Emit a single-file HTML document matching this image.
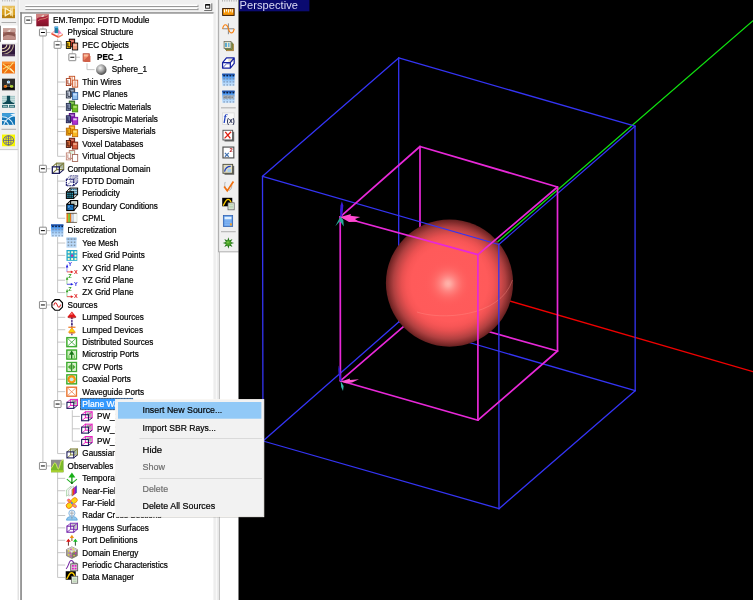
<!DOCTYPE html>
<html><head><meta charset="utf-8"><title>EM.Tempo</title>
<style>html,body{margin:0;padding:0;background:#fff;overflow:hidden}svg{will-change:transform}svg text{white-space:pre}</style></head>
<body>
<svg width="753" height="600" viewBox="0 0 753 600" style="display:block">

<defs>
<linearGradient id="groot" x1="0" y1="0" x2="0" y2="1"><stop offset="0" stop-color="#b03040"/><stop offset=".5" stop-color="#a01838"/><stop offset="1" stop-color="#7c1428"/></linearGradient>
<radialGradient id="gsph" cx=".4" cy=".35" r=".7"><stop offset="0" stop-color="#f4f4f4"/><stop offset=".45" stop-color="#a8a8a8"/><stop offset="1" stop-color="#404040"/></radialGradient>
<linearGradient id="gb" x1="0" y1="0" x2="0" y2="1"><stop offset="0" stop-color="#2060c0"/><stop offset=".25" stop-color="#4c98f0"/><stop offset=".6" stop-color="#a0ccf8"/><stop offset="1" stop-color="#d0e8ff"/></linearGradient>
<linearGradient id="grain" x1="0" y1="0" x2="1" y2="0"><stop offset="0" stop-color="#f0e020"/><stop offset=".3" stop-color="#f03020"/><stop offset=".6" stop-color="#c020c0"/><stop offset="1" stop-color="#2020e0"/></linearGradient>
<radialGradient id="gball" cx="0.5" cy="0.5" r="0.5">
 <stop offset="0" stop-color="#ff5c5c"/>
 <stop offset=".6" stop-color="#ff5a5a"/>
 <stop offset=".68" stop-color="#f85656"/>
 <stop offset=".75" stop-color="#e85050"/>
 <stop offset=".82" stop-color="#cc4848"/>
 <stop offset=".88" stop-color="#b04040"/>
 <stop offset=".94" stop-color="#8c3030"/>
 <stop offset="1" stop-color="#662020"/>
</radialGradient>
<radialGradient id="ghl" cx="0.5" cy="0.5" r="0.5">
 <stop offset="0" stop-color="#ffb4ac" stop-opacity="1"/>
 <stop offset=".12" stop-color="#ffaca4" stop-opacity=".95"/>
 <stop offset=".35" stop-color="#ff8c88" stop-opacity=".75"/>
 <stop offset=".6" stop-color="#ff7470" stop-opacity=".45"/>
 <stop offset=".8" stop-color="#ff6664" stop-opacity=".2"/>
 <stop offset="1" stop-color="#ff5c5c" stop-opacity="0"/>
</radialGradient>
</defs>

<rect x="0" y="0" width="753" height="600" fill="#fff"/>
<rect x="0" y="0" width="18" height="149.6" fill="#f0f0f0"/>
<rect x="0" y="149.2" width="18.3" height="0.9" fill="#c4c4c4"/>
<rect x="17.7" y="0" width="0.9" height="600" fill="#d0d0d0"/>
<rect x="19.4" y="0" width="199" height="13" fill="#f0f0f0"/>
<rect x="20.2" y="12.3" width="1.7" height="588" fill="#8c8c8c"/>
<rect x="20.2" y="12.3" width="194" height="1.3" fill="#808080"/>
<rect x="213.4" y="12.3" width="5" height="588" fill="#ededed"/>
<rect x="25.2" y="4.6" width="172.8" height="1.4" fill="#ffffff"/>
<rect x="25.4" y="6.0" width="172.8" height="1.0" fill="#989898"/>
<rect x="197.6" y="4.800000000000001" width="0.8" height="2.2" fill="#989898"/>
<rect x="25.2" y="7.700000000000001" width="172.8" height="1.4" fill="#ffffff"/>
<rect x="25.4" y="9.100000000000001" width="172.8" height="1.0" fill="#989898"/>
<rect x="197.6" y="7.9" width="0.8" height="2.2" fill="#989898"/>
<rect x="204.2" y="3.3" width="7.6" height="7.2" fill="#f0f0f0"/>
<path d="M204.2 10.5V3.3H211.8" fill="none" stroke="#fff" stroke-width="0.9"/>
<path d="M204.2 10.5H211.8V3.3" fill="none" stroke="#606060" stroke-width="0.9"/>
<rect x="205.6" y="4.6" width="4.2" height="3.6" fill="none" stroke="#000" stroke-width="0.8"/>
<rect x="205.6" y="4.3" width="4.2" height="1.3" fill="#000"/>
<rect x="2.2" y="0" width="0.9" height="1.5" fill="#b4b4b4"/>
<rect x="4.5" y="0" width="0.9" height="1.5" fill="#b4b4b4"/>
<rect x="6.8" y="0" width="0.9" height="1.5" fill="#b4b4b4"/>
<rect x="9.1" y="0" width="0.9" height="1.5" fill="#b4b4b4"/>
<rect x="11.4" y="0" width="0.9" height="1.5" fill="#b4b4b4"/>
<rect x="13.7" y="0" width="0.9" height="1.5" fill="#b4b4b4"/>
<g transform="translate(2.0 5.90) scale(0.8125 0.7625)"><rect x="0" y="0" width="16" height="16" fill="#d8a020"/><rect x="0" y="0" width="16" height="4" fill="#e8c060"/><rect x="0" y="12" width="16" height="4" fill="#b88010"/><path d="M4 2V14M4 3L12 8L4 13M11 3V13" stroke="#fff4d0" stroke-width="1.6" fill="none"/><path d="M13 2V14" stroke="#f8e0a0" stroke-width="1.2"/></g>
<rect x="1.5" y="22.0" width="14.6" height="0.9" fill="#a4a4a4"/>
<rect x="0.8" y="25.5" width="16.6" height="17.2" fill="#fff"/>
<rect x="0" y="25.700000000000003" width="0.9" height="16.2" fill="#707070"/>
<g transform="translate(3.0 28.45) scale(0.7750 0.7063)"><rect x="0" y="0" width="16" height="16" fill="#a87068"/><rect x="0" y="0" width="16" height="5" fill="#c8a098"/><path d="M0 9C4 4 9 4 16 8V16H0Z" fill="#8c5850"/><path d="M0 16V12C5 8 10 9 16 12V16Z" fill="#c09088"/><path d="M5 4L10 1L9 5Z" fill="#f0e0d8"/></g>
<g transform="translate(2.0 44.45) scale(0.8125 0.7312)"><rect x="0" y="0" width="16" height="16" fill="#30183c"/><path d="M0 6A6 6 0 0 0 6 0" fill="none" stroke="#e8d8b0" stroke-width="1.4"/><path d="M0 10A10 10 0 0 0 10 0" fill="none" stroke="#e0d0a8" stroke-width="1.4"/><path d="M0 14A14 14 0 0 0 14 0" fill="none" stroke="#c0b090" stroke-width="1.3"/><rect x="0" y="13" width="16" height="3" fill="#503858"/></g>
<g transform="translate(2.0 61.75) scale(0.8125 0.7312)"><rect x="0" y="0" width="16" height="16" fill="#f07010"/><rect x="0" y="0" width="16" height="3" fill="#f89030"/><path d="M1 3L14 14M14 1L3 15M1 10L9 5" stroke="#f8e080" stroke-width="1.3" fill="none"/><path d="M10 9L15 15" stroke="#fff0c0" stroke-width="1.5"/></g>
<g transform="translate(2.0 78.65) scale(0.8125 0.7312)"><rect x="0" y="0" width="16" height="16" fill="#2c2c2c"/><path d="M1 13Q8 9 15 13V15H1Z" fill="#080808"/><path d="M8 5L4.4 10.6H11.6Z" fill="none" stroke="#707070" stroke-width=".9"/><circle cx="8" cy="4.6" r="2.1" fill="#d8ecf8"/><circle cx="8.3" cy="4.2" r="1" fill="#68b0f0"/><circle cx="4.2" cy="10.6" r="2.0" fill="#f09020"/><circle cx="3.6" cy="11.2" r="1" fill="#e04020"/><circle cx="11.8" cy="10.6" r="2.0" fill="#d8e040"/><circle cx="12.2" cy="10" r="1" fill="#60c030"/></g>
<g transform="translate(2.0 95.85) scale(0.8125 0.7312)"><rect x="0" y="0" width="16" height="16" fill="#a4c8c8"/><path d="M0 2.5H16M0 5H16M0 7.5H16" stroke="#d4e8e8" stroke-width=".9"/><path d="M6 0H10V5.5Q10.4 9 15 10V11.5H1V10Q5.6 9 6 5.5Z" fill="#0c4854"/><rect x="0" y="11.5" width="16" height="1.3" fill="#f0f8f8"/><rect x="0" y="12.8" width="16" height="3.2" fill="#1c5c68"/><path d="M1 14.4H6.6M9.4 14.4H15" stroke="#a8d0d0" stroke-width="1.2"/><rect x="7.4" y="11.5" width="1.2" height="4.5" fill="#f0f8f8"/></g>
<g transform="translate(2.0 113.15) scale(0.8125 0.7312)"><rect x="0" y="0" width="16" height="16" fill="#1474b4"/><rect x="0" y="0" width="16" height="5" fill="#3c9cd8"/><path d="M16 0V5L10 2Z" fill="#e8f4ff"/><path d="M0 5C6 5 12 9 14 16M0 10C4 10 7 12 8 16M16 3C9 5 4 10 2 16" stroke="#e0f2ff" stroke-width="1.4" fill="none"/></g>
<rect x="1.5" y="128.8" width="14.6" height="0.9" fill="#a4a4a4"/>
<g transform="translate(2.0 134.55) scale(0.8125 0.7312)"><rect x="0" y="0" width="16" height="16" fill="#f8f800"/><circle cx="8" cy="8" r="6.4" fill="none" stroke="#4848b0" stroke-width="1.0"/><ellipse cx="8" cy="8" rx="3" ry="6.4" fill="none" stroke="#5050b0" stroke-width=".75"/><path d="M1.6 8H14.4M8 1.6V14.4" stroke="#4040a8" stroke-width=".9" fill="none"/><path d="M2.8 4.4Q8 6.6 13.2 4.4M2.8 11.6Q8 9.4 13.2 11.6" stroke="#5858b8" stroke-width=".7" fill="none"/></g>
<path d="M31.70 20.10H35.80 M42.90 26.30V465.96 M46.40 32.48H50.50 M57.60 38.69V156.33 M61.10 44.87H65.20 M72.30 51.07V57.26 M75.80 57.26H79.90 M87.00 63.46V69.64 M87.00 69.64H94.60 M57.60 82.03H65.20 M57.60 94.41H65.20 M57.60 106.79H65.20 M57.60 119.18H65.20 M57.60 131.56H65.20 M57.60 143.95H65.20 M57.60 156.33H65.20 M46.40 168.72H50.50 M57.60 174.92V218.26 M57.60 181.10H65.20 M57.60 193.49H65.20 M57.60 205.88H65.20 M57.60 218.26H65.20 M46.40 230.64H50.50 M57.60 236.84V292.57 M57.60 243.03H65.20 M57.60 255.41H65.20 M57.60 267.80H65.20 M57.60 280.19H65.20 M57.60 292.57H65.20 M46.40 304.96H50.50 M57.60 311.16V453.57 M57.60 317.34H65.20 M57.60 329.73H65.20 M57.60 342.11H65.20 M57.60 354.50H65.20 M57.60 366.88H65.20 M57.60 379.27H65.20 M57.60 391.65H65.20 M61.10 404.04H65.20 M72.30 410.24V441.19 M72.30 416.42H79.90 M72.30 428.81H79.90 M72.30 441.19H79.90 M57.60 453.57H65.20 M46.40 465.96H50.50 M57.60 472.16V577.43 M57.60 478.35H65.20 M57.60 490.73H65.20 M57.60 503.12H65.20 M57.60 515.50H65.20 M57.60 527.88H65.20 M57.60 540.27H65.20 M57.60 552.65H65.20 M57.60 565.04H65.20 M57.60 577.43H65.20" stroke="#bcbcbc" stroke-width="0.85" fill="none"/>
<rect x="24.75" y="16.65" width="6.9" height="6.9" fill="#fff" stroke="#808080" stroke-width="0.9" rx="0.4"/>
<rect x="26.20" y="19.60" width="4.0" height="1.0" fill="#000"/>
<g transform="translate(36.30 13.90) scale(0.774)"><rect x="0" y="0" width="16" height="16" fill="url(#groot)"/><path d="M0 7C4 2 8 6 16 1V0H0Z" fill="#d89890" opacity=".8"/><path d="M2 9C6 5 10 8 15 4" stroke="#e0a070" stroke-width="1.2" fill="none" opacity=".8"/><path d="M6 3L10 1L9 4Z" fill="#f4e8e0"/></g>
<text transform="translate(52.90 22.95) scale(0.9055555555555556 1)" font-family="'Liberation Sans', sans-serif" font-size="9.0" fill="#000" stroke="#000" stroke-width="0.22" textLength="106.67" lengthAdjust="spacingAndGlyphs">EM.Tempo: FDTD Module</text>
<rect x="39.45" y="29.04" width="6.9" height="6.9" fill="#fff" stroke="#808080" stroke-width="0.9" rx="0.4"/>
<rect x="40.90" y="31.98" width="4.0" height="1.0" fill="#000"/>
<g transform="translate(51.00 26.29) scale(0.774)"><path d="M0.5 8.5L6 4L15.5 10L9.5 14.6Z" fill="#f8b0b8"/><path d="M0.5 8.5L9.5 13V15.2L0.5 10.6Z" fill="#e85038"/><path d="M9.5 13L15.5 10V11.6L9.5 15.2Z" fill="#f08058"/><path d="M2.4 8.8L5.6 7L9.6 9.4L7.6 11.6Z" fill="#fff"/><path d="M10.4 10.4L12.8 9L14.4 10L11.2 12.2Z" fill="#fff"/><path d="M9 3L13.8 9.2H9Z" fill="#f080c0"/><rect x="4.6" y="0.4" width="4.6" height="8.4" fill="#2074a8"/><rect x="4.6" y="0.4" width="4.6" height="1.8" fill="#58b0e8"/><rect x="7.4" y="2.2" width="1.8" height="6.6" fill="#18909c"/></g>
<text transform="translate(67.60 35.34) scale(0.9055555555555556 1)" font-family="'Liberation Sans', sans-serif" font-size="9.0" fill="#000" stroke="#000" stroke-width="0.22">Physical Structure</text>
<rect x="54.15" y="41.42" width="6.9" height="6.9" fill="#fff" stroke="#808080" stroke-width="0.9" rx="0.4"/>
<rect x="55.60" y="44.37" width="4.0" height="1.0" fill="#000"/>
<g transform="translate(65.70 38.67) scale(0.774)"><rect x="4.6" y="0.6" width="7" height="10" fill="#c83828" stroke="#000" stroke-width="1.1"/><rect x="5.8" y="2" width="4.6" height="2.2" fill="#f8c0a8" opacity=".65"/><rect x="0.8" y="3.6" width="5.6" height="9" fill="#f0c010" stroke="#000" stroke-width="1.1"/><path d="M2.8 5.5V10.6H5.6" stroke="#000" fill="none" stroke-width="1.1"/><rect x="8.6" y="5.6" width="6.9" height="9" fill="#f09878" stroke="#000" stroke-width="1.1"/><rect x="9.8" y="7" width="4.5" height="2.4" fill="#f8c0a8"/></g>
<text transform="translate(82.30 47.72) scale(0.9055555555555556 1)" font-family="'Liberation Sans', sans-serif" font-size="9.0" fill="#000" stroke="#000" stroke-width="0.22">PEC Objects</text>
<rect x="68.85" y="53.80" width="6.9" height="6.9" fill="#fff" stroke="#808080" stroke-width="0.9" rx="0.4"/>
<rect x="70.30" y="56.76" width="4.0" height="1.0" fill="#000"/>
<g transform="translate(80.40 51.05) scale(0.774)"><rect x="3.5" y="3.5" width="8" height="9.5" fill="#f08868" stroke="#b04030"/><rect x="4.5" y="4.5" width="5" height="2.5" fill="#f8c0a0"/><path d="M11.5 5.5L13 7V14H6L3.5 13" fill="#d06048" stroke="none"/></g>
<text transform="translate(97.00 60.11) scale(0.9055555555555556 1)" font-family="'Liberation Sans', sans-serif" font-size="9.0" fill="#000" stroke="#000" stroke-width="0.22" font-weight="bold">PEC_1</text>
<g transform="translate(95.10 63.44) scale(0.774)"><circle cx="8" cy="8" r="6.8" fill="url(#gsph)"/></g>
<text transform="translate(111.70 72.49) scale(0.9055555555555556 1)" font-family="'Liberation Sans', sans-serif" font-size="9.0" fill="#000" stroke="#000" stroke-width="0.22">Sphere_1</text>
<g transform="translate(65.70 75.83) scale(0.774)"><rect x="4.6" y="0.6" width="7" height="10" fill="#fff" stroke="#c04818" stroke-width="1.1"/><rect x="0.8" y="3.6" width="5.6" height="9" fill="#fff" stroke="#a03010" stroke-width="1.1"/><path d="M2.8 5.5V10.6H5.6" stroke="#a03010" fill="none" stroke-width="1.1"/><rect x="8.6" y="5.6" width="6.9" height="9" fill="#fff" stroke="#c04818" stroke-width="1.1"/><path d="M6.5 1V10M8.5 1V10M11 7V15M13 7V15" stroke="#e07040" stroke-width=".9"/></g>
<text transform="translate(82.30 84.88) scale(0.9055555555555556 1)" font-family="'Liberation Sans', sans-serif" font-size="9.0" fill="#000" stroke="#000" stroke-width="0.22">Thin Wires</text>
<g transform="translate(65.70 88.21) scale(0.774)"><rect x="4.6" y="0.6" width="7" height="10" fill="#505868" stroke="#303848" stroke-width="1.1"/><rect x="5.8" y="2" width="4.6" height="2.2" fill="#c8e0ff" opacity=".65"/><rect x="0.8" y="3.6" width="5.6" height="9" fill="#c8d0e0" stroke="#202838" stroke-width="1.1"/><path d="M2.8 5.5V10.6H5.6" stroke="#202838" fill="none" stroke-width="1.1"/><rect x="8.6" y="5.6" width="6.9" height="9" fill="#90c0f0" stroke="#3060a0" stroke-width="1.1"/><rect x="9.8" y="7" width="4.5" height="2.4" fill="#c8e0ff"/></g>
<text transform="translate(82.30 97.26) scale(0.9055555555555556 1)" font-family="'Liberation Sans', sans-serif" font-size="9.0" fill="#000" stroke="#000" stroke-width="0.22">PMC Planes</text>
<g transform="translate(65.70 100.59) scale(0.774)"><rect x="4.6" y="0.6" width="7" height="10" fill="#50a030" stroke="#306020" stroke-width="1.1"/><rect x="5.8" y="2" width="4.6" height="2.2" fill="#b0e070" opacity=".65"/><rect x="0.8" y="3.6" width="5.6" height="9" fill="#8090b0" stroke="#202848" stroke-width="1.1"/><path d="M2.8 5.5V10.6H5.6" stroke="#202848" fill="none" stroke-width="1.1"/><rect x="8.6" y="5.6" width="6.9" height="9" fill="#70c020" stroke="#408010" stroke-width="1.1"/><rect x="9.8" y="7" width="4.5" height="2.4" fill="#b0e070"/></g>
<text transform="translate(82.30 109.64) scale(0.9055555555555556 1)" font-family="'Liberation Sans', sans-serif" font-size="9.0" fill="#000" stroke="#000" stroke-width="0.22">Dielectric Materials</text>
<g transform="translate(65.70 112.98) scale(0.774)"><rect x="4.6" y="0.6" width="7" height="10" fill="#8020b0" stroke="#500880" stroke-width="1.1"/><rect x="5.8" y="2" width="4.6" height="2.2" fill="#e0d0f0" opacity=".65"/><rect x="0.8" y="3.6" width="5.6" height="9" fill="#6870a0" stroke="#181848" stroke-width="1.1"/><path d="M2.8 5.5V10.6H5.6" stroke="#181848" fill="none" stroke-width="1.1"/><rect x="8.6" y="5.6" width="6.9" height="9" fill="#b030d0" stroke="#7010a0" stroke-width="1.1"/><rect x="9.8" y="7" width="4.5" height="2.4" fill="#e0d0f0"/></g>
<text transform="translate(82.30 122.03) scale(0.9055555555555556 1)" font-family="'Liberation Sans', sans-serif" font-size="9.0" fill="#000" stroke="#000" stroke-width="0.22">Anisotropic Materials</text>
<g transform="translate(65.70 125.36) scale(0.774)"><rect x="4.6" y="0.6" width="7" height="10" fill="#f0a010" stroke="#c06000" stroke-width="1.1"/><rect x="5.8" y="2" width="4.6" height="2.2" fill="#ffe080" opacity=".65"/><rect x="0.8" y="3.6" width="5.6" height="9" fill="#f0b010" stroke="#b06000" stroke-width="1.1"/><path d="M2.8 5.5V10.6H5.6" stroke="#b06000" fill="none" stroke-width="1.1"/><rect x="8.6" y="5.6" width="6.9" height="9" fill="#f8b820" stroke="#c06800" stroke-width="1.1"/><rect x="9.8" y="7" width="4.5" height="2.4" fill="#ffe080"/></g>
<text transform="translate(82.30 134.41) scale(0.9055555555555556 1)" font-family="'Liberation Sans', sans-serif" font-size="9.0" fill="#000" stroke="#000" stroke-width="0.22">Dispersive Materials</text>
<g transform="translate(65.70 137.75) scale(0.774)"><rect x="4.6" y="0.6" width="7" height="10" fill="#a83020" stroke="#601810" stroke-width="1.1"/><rect x="5.8" y="2" width="4.6" height="2.2" fill="#f0a888" opacity=".65"/><rect x="0.8" y="3.6" width="5.6" height="9" fill="#d06838" stroke="#401008" stroke-width="1.1"/><path d="M2.8 5.5V10.6H5.6" stroke="#401008" fill="none" stroke-width="1.1"/><rect x="8.6" y="5.6" width="6.9" height="9" fill="#d86040" stroke="#702010" stroke-width="1.1"/><rect x="9.8" y="7" width="4.5" height="2.4" fill="#f0a888"/></g>
<text transform="translate(82.30 146.80) scale(0.9055555555555556 1)" font-family="'Liberation Sans', sans-serif" font-size="9.0" fill="#000" stroke="#000" stroke-width="0.22">Voxel Databases</text>
<g transform="translate(65.70 150.13) scale(0.774)"><rect x="4.6" y="0.6" width="7" height="10" fill="#fff" stroke="#b07060" stroke-width="1.1"/><rect x="0.8" y="3.6" width="5.6" height="9" fill="#fff" stroke="#c08070" stroke-width="1.1"/><path d="M2.8 5.5V10.6H5.6" stroke="#c08070" fill="none" stroke-width="1.1"/><rect x="8.6" y="5.6" width="6.9" height="9" fill="#fff" stroke="#a06050" stroke-width="1.1"/><path d="M5 2H10M5 4H10" stroke="#80c080" stroke-width=".6"/></g>
<text transform="translate(82.30 159.18) scale(0.9055555555555556 1)" font-family="'Liberation Sans', sans-serif" font-size="9.0" fill="#000" stroke="#000" stroke-width="0.22">Virtual Objects</text>
<rect x="39.45" y="165.27" width="6.9" height="6.9" fill="#fff" stroke="#808080" stroke-width="0.9" rx="0.4"/>
<rect x="40.90" y="168.22" width="4.0" height="1.0" fill="#000"/>
<g transform="translate(51.00 162.52) scale(0.774)"><path d="M7.3 0.8H16.4V9.2L10.799999999999999 14.0H1.7V5.6Z" fill="#fff"/><rect x="7.3" y="0.8" width="9.10" height="8.40" fill="#eef0e6"/><path d="M8.50 1.60H15.60V8.20Q9.80 7.70 8.50 1.60Z" fill="#a8b4a0"/><path d="M1.7 14.0L7.3 9.2M1.7 5.6L7.3 0.8M10.799999999999999 5.6L16.4 0.8" fill="none" stroke="#7c7c3c" stroke-width="1.30"/><rect x="7.3" y="0.8" width="9.10" height="8.40" fill="none" stroke="#7c7c3c" stroke-width="1.45"/><path d="M10.799999999999999 14.0L16.4 9.2" fill="none" stroke="#181858" stroke-width="1.45"/><rect x="1.7" y="5.6" width="9.10" height="8.40" fill="none" stroke="#181858" stroke-width="1.59"/></g>
<text transform="translate(67.60 171.57) scale(0.9055555555555556 1)" font-family="'Liberation Sans', sans-serif" font-size="9.0" fill="#000" stroke="#000" stroke-width="0.22">Computational Domain</text>
<g transform="translate(65.70 174.91) scale(0.774)"><g stroke-dasharray="2.3 0.7"><path d="M6.1000000000000005 1.0H15.4V9.4L10.2 14.0H0.9V5.6Z" fill="#fff"/><rect x="6.1000000000000005" y="1.0" width="9.30" height="8.40" fill="#e4e4ee"/><path d="M7.30 1.80H14.60V8.40Q8.60 7.90 7.30 1.80Z" fill="#c0c0d4"/><path d="M0.9 14.0L6.1000000000000005 9.4M0.9 5.6L6.1000000000000005 1.0M10.2 5.6L15.4 1.0" fill="none" stroke="#8888b4" stroke-width="1.30"/><rect x="6.1000000000000005" y="1.0" width="9.30" height="8.40" fill="none" stroke="#8888b4" stroke-width="1.45"/><path d="M10.2 14.0L15.4 9.4" fill="none" stroke="#18186c" stroke-width="1.45"/><rect x="0.9" y="5.6" width="9.30" height="8.40" fill="none" stroke="#18186c" stroke-width="1.59"/></g></g>
<text transform="translate(82.30 183.95) scale(0.9055555555555556 1)" font-family="'Liberation Sans', sans-serif" font-size="9.0" fill="#000" stroke="#000" stroke-width="0.22">FDTD Domain</text>
<g transform="translate(65.70 187.29) scale(0.774)"><path d="M0.8 5.8L5.6 1H15.4V9.6L10.4 14.4H0.8Z" fill="#fff"/><rect x="5.6" y="1" width="9.8" height="8.6" fill="#c4e6ee" stroke="#000" stroke-width="1.2"/><rect x="6.9" y="2.2" width="1.6" height="1.5" fill="#0c507c"/><rect x="9.7" y="2.2" width="1.6" height="1.5" fill="#0c507c"/><rect x="12.5" y="2.2" width="1.6" height="1.5" fill="#0c507c"/><rect x="6.9" y="4.7" width="1.6" height="1.5" fill="#0c507c"/><rect x="9.7" y="4.7" width="1.6" height="1.5" fill="#0c507c"/><rect x="12.5" y="4.7" width="1.6" height="1.5" fill="#0c507c"/><rect x="6.9" y="7.2" width="1.6" height="1.5" fill="#0c507c"/><rect x="9.7" y="7.2" width="1.6" height="1.5" fill="#0c507c"/><rect x="12.5" y="7.2" width="1.6" height="1.5" fill="#0c507c"/><path d="M0.8 5.8L5.6 1M10.4 14.4L15.4 9.6" stroke="#000" stroke-width="1.2"/><rect x="0.8" y="5.8" width="9.6" height="8.6" fill="#080c10" stroke="#000" stroke-width="1.2"/><rect x="2.0" y="7.0" width="1.7" height="1.5" fill="#38c8e8"/><rect x="4.8" y="7.0" width="1.7" height="1.5" fill="#38c8e8"/><rect x="7.6" y="7.0" width="1.7" height="1.5" fill="#38c8e8"/><rect x="2.0" y="9.5" width="1.7" height="1.5" fill="#38c8e8"/><rect x="4.8" y="9.5" width="1.7" height="1.5" fill="#38c8e8"/><rect x="7.6" y="9.5" width="1.7" height="1.5" fill="#38c8e8"/><rect x="2.0" y="12.0" width="1.7" height="1.5" fill="#38c8e8"/><rect x="4.8" y="12.0" width="1.7" height="1.5" fill="#38c8e8"/><rect x="7.6" y="12.0" width="1.7" height="1.5" fill="#38c8e8"/></g>
<text transform="translate(82.30 196.34) scale(0.9055555555555556 1)" font-family="'Liberation Sans', sans-serif" font-size="9.0" fill="#000" stroke="#000" stroke-width="0.22">Periodicity</text>
<g transform="translate(65.70 199.68) scale(0.774)"><path d="M1.4 5.8L6 1.2H15.4V8.6L10.4 14.2H1.4Z" fill="#fff"/><rect x="6.4" y="1.2" width="9" height="6.8" fill="#e8ece8" stroke="#000" stroke-width="1.5"/><rect x="8" y="2.8" width="5.6" height="3.4" fill="#c0ccc0"/><path d="M1.4 6L6.4 1.2M10.6 14L15.4 8" stroke="#000" stroke-width="1.3"/><rect x="1.4" y="6" width="9.2" height="8" fill="#1c78c8" stroke="#000" stroke-width="1.5"/><path d="M2.6 13L6.6 8.6L9 11" stroke="#103868" stroke-width="1" fill="none"/><path d="M3 9.4H5.4" stroke="#88c8f8" stroke-width="1.1"/></g>
<text transform="translate(82.30 208.72) scale(0.9055555555555556 1)" font-family="'Liberation Sans', sans-serif" font-size="9.0" fill="#000" stroke="#000" stroke-width="0.22">Boundary Conditions</text>
<g transform="translate(65.70 212.06) scale(0.774)"><rect x="1" y="1.5" width="13.6" height="12" fill="#f4f8f4"/><rect x="1" y="1.5" width="2.2" height="12" fill="#e87818"/><rect x="3.2" y="1.5" width="2.3" height="12" fill="#78c020"/><rect x="5.5" y="1.5" width="1.7" height="12" fill="#e87818"/><rect x="7.2" y="1.5" width="3.4" height="12" fill="#b8c0d0"/><rect x="8.4" y="3.5" width="1.6" height="8" fill="#d8dce8"/><path d="M1 1.6H14.6" stroke="#50402c" stroke-width="1.1"/><path d="M1 13.4H14.6" stroke="#584838" stroke-width="1.0"/><path d="M14.6 1.5V13.5" stroke="#c8c8c0" stroke-width=".7"/></g>
<text transform="translate(82.30 221.11) scale(0.9055555555555556 1)" font-family="'Liberation Sans', sans-serif" font-size="9.0" fill="#000" stroke="#000" stroke-width="0.22">CPML</text>
<rect x="39.45" y="227.19" width="6.9" height="6.9" fill="#fff" stroke="#808080" stroke-width="0.9" rx="0.4"/>
<rect x="40.90" y="230.14" width="4.0" height="1.0" fill="#000"/>
<g transform="translate(51.00 224.44) scale(0.774)"><rect x="0" y="0" width="16" height="16" fill="url(#gb)"/><rect x="0" y="0" width="16" height="2" fill="#2458b0"/><rect x="1.5" y="1.5" width="2" height="2" fill="#0c1c38" opacity="1"/><rect x="5.5" y="1.5" width="2" height="2" fill="#0c1c38" opacity="1"/><rect x="9.5" y="1.5" width="2" height="2" fill="#0c1c38" opacity="1"/><rect x="13.5" y="1.5" width="2" height="2" fill="#0c1c38" opacity="1"/><rect x="1.5" y="5.5" width="2" height="2" fill="#7890b0" opacity="1"/><rect x="5.5" y="5.5" width="2" height="2" fill="#7890b0" opacity="1"/><rect x="9.5" y="5.5" width="2" height="2" fill="#7890b0" opacity="1"/><rect x="13.5" y="5.5" width="2" height="2" fill="#7890b0" opacity="1"/><rect x="1.5" y="9.5" width="2" height="2" fill="#7890b0" opacity="0.7"/><rect x="5.5" y="9.5" width="2" height="2" fill="#7890b0" opacity="0.7"/><rect x="9.5" y="9.5" width="2" height="2" fill="#7890b0" opacity="0.7"/><rect x="13.5" y="9.5" width="2" height="2" fill="#7890b0" opacity="0.7"/><rect x="1.5" y="13.5" width="2" height="2" fill="#7890b0" opacity="0.7"/><rect x="5.5" y="13.5" width="2" height="2" fill="#7890b0" opacity="0.7"/><rect x="9.5" y="13.5" width="2" height="2" fill="#7890b0" opacity="0.7"/><rect x="13.5" y="13.5" width="2" height="2" fill="#7890b0" opacity="0.7"/></g>
<text transform="translate(67.60 233.49) scale(0.9055555555555556 1)" font-family="'Liberation Sans', sans-serif" font-size="9.0" fill="#000" stroke="#000" stroke-width="0.22">Discretization</text>
<g transform="translate(65.70 236.83) scale(0.774)"><rect x="1" y="1" width="13" height="13" fill="#b8d8f8"/><rect x="1" y="1" width="13" height="3" fill="#98c0e8"/><rect x="2.5" y="2" width="2" height="2" fill="#8898a8"/><rect x="6.5" y="2" width="2" height="2" fill="#8898a8"/><rect x="10.5" y="2" width="2" height="2" fill="#8898a8"/><rect x="2.5" y="6" width="2" height="2" fill="#8898a8"/><rect x="6.5" y="6" width="2" height="2" fill="#8898a8"/><rect x="10.5" y="6" width="2" height="2" fill="#8898a8"/><rect x="2.5" y="10" width="2" height="2" fill="#8898a8"/><rect x="6.5" y="10" width="2" height="2" fill="#8898a8"/><rect x="10.5" y="10" width="2" height="2" fill="#8898a8"/></g>
<text transform="translate(82.30 245.88) scale(0.9055555555555556 1)" font-family="'Liberation Sans', sans-serif" font-size="9.0" fill="#000" stroke="#000" stroke-width="0.22">Yee Mesh</text>
<g transform="translate(65.70 249.22) scale(0.774)"><rect x="1" y="1" width="14" height="14" fill="#20a8c8"/><rect x="2.6" y="2.6" width="2.6" height="2.6" fill="#f8f8d0"/><rect x="7.0" y="2.6" width="2.6" height="2.6" fill="#f8f8d0"/><rect x="11.4" y="2.6" width="2.6" height="2.6" fill="#f8f8d0"/><rect x="2.6" y="7.0" width="2.6" height="2.6" fill="#f8f8d0"/><rect x="7.0" y="7.0" width="2.6" height="2.6" fill="#f020a0"/><rect x="11.4" y="7.0" width="2.6" height="2.6" fill="#f8f8d0"/><rect x="2.6" y="11.4" width="2.6" height="2.6" fill="#f8f8d0"/><rect x="7.0" y="11.4" width="2.6" height="2.6" fill="#f8f8d0"/><rect x="11.4" y="11.4" width="2.6" height="2.6" fill="#f8f8d0"/></g>
<text transform="translate(82.30 258.26) scale(0.9055555555555556 1)" font-family="'Liberation Sans', sans-serif" font-size="9.0" fill="#000" stroke="#000" stroke-width="0.22">Fixed Grid Points</text>
<g transform="translate(65.70 261.60) scale(0.774)"><path d="M1.6 13.3V6" stroke="#2020e0" stroke-width="0.9" fill="none" opacity=".7"/><path d="M0.2 7.6L1.8 3.2L3.4 7.6Z" fill="#2020e0"/><path d="M1.6 13.3H8" stroke="#e02020" stroke-width="1.0" fill="none"/><path d="M6.6 11.6L10.2 13.3L6.6 15Z" fill="#e02020"/><text x="3.2" y="5.4" font-size="7.2" font-weight="bold" font-family="Liberation Sans, sans-serif" fill="#2020e0">Y</text><text x="10.8" y="15.6" font-size="7.2" font-weight="bold" font-family="Liberation Sans, sans-serif" fill="#e02020">X</text></g>
<text transform="translate(82.30 270.65) scale(0.9055555555555556 1)" font-family="'Liberation Sans', sans-serif" font-size="9.0" fill="#000" stroke="#000" stroke-width="0.22">XY Grid Plane</text>
<g transform="translate(65.70 273.99) scale(0.774)"><path d="M1.6 13.3V6" stroke="#30a020" stroke-width="0.9" fill="none" opacity=".7"/><path d="M0.2 7.6L1.8 3.2L3.4 7.6Z" fill="#30a020"/><path d="M1.6 13.3H8" stroke="#2020e0" stroke-width="1.0" fill="none"/><path d="M6.6 11.6L10.2 13.3L6.6 15Z" fill="#2020e0"/><text x="3.2" y="5.4" font-size="7.2" font-weight="bold" font-family="Liberation Sans, sans-serif" fill="#30a020">Z</text><text x="10.8" y="15.6" font-size="7.2" font-weight="bold" font-family="Liberation Sans, sans-serif" fill="#2020e0">Y</text></g>
<text transform="translate(82.30 283.04) scale(0.9055555555555556 1)" font-family="'Liberation Sans', sans-serif" font-size="9.0" fill="#000" stroke="#000" stroke-width="0.22">YZ Grid Plane</text>
<g transform="translate(65.70 286.37) scale(0.774)"><path d="M1.6 13.3V6" stroke="#30a020" stroke-width="0.9" fill="none" opacity=".7"/><path d="M0.2 7.6L1.8 3.2L3.4 7.6Z" fill="#30a020"/><path d="M1.6 13.3H8" stroke="#e02020" stroke-width="1.0" fill="none"/><path d="M6.6 11.6L10.2 13.3L6.6 15Z" fill="#e02020"/><text x="3.2" y="5.4" font-size="7.2" font-weight="bold" font-family="Liberation Sans, sans-serif" fill="#30a020">Z</text><text x="10.8" y="15.6" font-size="7.2" font-weight="bold" font-family="Liberation Sans, sans-serif" fill="#e02020">X</text></g>
<text transform="translate(82.30 295.42) scale(0.9055555555555556 1)" font-family="'Liberation Sans', sans-serif" font-size="9.0" fill="#000" stroke="#000" stroke-width="0.22">ZX Grid Plane</text>
<rect x="39.45" y="301.51" width="6.9" height="6.9" fill="#fff" stroke="#808080" stroke-width="0.9" rx="0.4"/>
<rect x="40.90" y="304.46" width="4.0" height="1.0" fill="#000"/>
<g transform="translate(51.00 298.76) scale(0.774)"><path d="M5.2 1.2H10.8L14.8 5.2V10.8L10.8 14.8H5.2L1.2 10.8V5.2Z" fill="#fff" stroke="#000" stroke-width="1.5"/><path d="M3.6 8.4C4.8 4 6.6 4 8 8S11.2 12 12.4 7.6" fill="none" stroke="#d82020" stroke-width="1.3"/></g>
<text transform="translate(67.60 307.81) scale(0.9055555555555556 1)" font-family="'Liberation Sans', sans-serif" font-size="9.0" fill="#000" stroke="#000" stroke-width="0.22">Sources</text>
<g transform="translate(65.70 311.14) scale(0.774)"><path d="M8 7V19" stroke="#402080" stroke-width="1.7" stroke-dasharray="3.2 0.8"/><path d="M2.2 7.6L8 0.6L13.8 7.6Q8 9.4 2.2 7.6Z" fill="#e01818"/><path d="M5.5 4.6L8 1.8L9.4 4.2Z" fill="#ff8080"/><path d="M2.2 7.6Q8 9.6 13.8 7.6L12.6 8.8Q8 10 3.4 8.8Z" fill="#901010"/></g>
<text transform="translate(82.30 320.19) scale(0.9055555555555556 1)" font-family="'Liberation Sans', sans-serif" font-size="9.0" fill="#000" stroke="#000" stroke-width="0.22">Lumped Sources</text>
<g transform="translate(65.70 323.53) scale(0.774)"><path d="M8 0V16" stroke="#382078" stroke-width="1.5" stroke-dasharray="2.4 0.8"/><path d="M3.4 4.8H12.6" stroke="#f07820" stroke-width="1.6"/><path d="M3.6 11.4L8 5.6L12.4 11.4Z" fill="#f8d808" stroke="#f09010" stroke-width=".9"/><path d="M4.4 12.2H11.6" stroke="#e06010" stroke-width="1.3"/></g>
<text transform="translate(82.30 332.58) scale(0.9055555555555556 1)" font-family="'Liberation Sans', sans-serif" font-size="9.0" fill="#000" stroke="#000" stroke-width="0.22">Lumped Devices</text>
<g transform="translate(65.70 335.91) scale(0.774)"><rect x="1.5" y="2.3" width="12.4" height="11.6" fill="#fff" stroke="#78d058" stroke-width="2"/><rect x="1.5" y="2.3" width="12.4" height="11.6" fill="none" stroke="#2c9c2c" stroke-width="1"/><path d="M2.5 3.3L13 13M13 3.3L2.5 13" stroke="#30a030" stroke-width="1"/></g>
<text transform="translate(82.30 344.96) scale(0.9055555555555556 1)" font-family="'Liberation Sans', sans-serif" font-size="9.0" fill="#000" stroke="#000" stroke-width="0.22">Distributed Sources</text>
<g transform="translate(65.70 348.30) scale(0.774)"><rect x="1.5" y="2.3" width="12.4" height="11.6" fill="#fff" stroke="#78d058" stroke-width="2"/><rect x="1.5" y="2.3" width="12.4" height="11.6" fill="none" stroke="#2c9c2c" stroke-width="1"/><rect x="3" y="3.6" width="9.4" height="9" fill="#d0f0c0"/><path d="M7.7 13.4V5" stroke="#187818" stroke-width="1.7"/><path d="M4.2 8.4L7.7 3L11.2 8.4Z" fill="#187818"/><path d="M4.2 9V13M11.2 9V13" stroke="#50b838" stroke-width="1.1"/></g>
<text transform="translate(82.30 357.35) scale(0.9055555555555556 1)" font-family="'Liberation Sans', sans-serif" font-size="9.0" fill="#000" stroke="#000" stroke-width="0.22">Microstrip Ports</text>
<g transform="translate(65.70 360.68) scale(0.774)"><rect x="1.5" y="2.3" width="12.4" height="11.6" fill="#fff" stroke="#78d058" stroke-width="2"/><rect x="1.5" y="2.3" width="12.4" height="11.6" fill="none" stroke="#2c9c2c" stroke-width="1"/><rect x="3" y="3.6" width="9.4" height="9" fill="#d8f0c8"/><path d="M7.7 3V13.4" stroke="#208020" stroke-width="1.4"/><path d="M2.8 8.1L6.6 4.6V11.6ZM12.6 8.1L8.8 4.6V11.6Z" fill="#48a830"/></g>
<text transform="translate(82.30 369.73) scale(0.9055555555555556 1)" font-family="'Liberation Sans', sans-serif" font-size="9.0" fill="#000" stroke="#000" stroke-width="0.22">CPW Ports</text>
<g transform="translate(65.70 373.07) scale(0.774)"><rect x="1.5" y="2.3" width="12.4" height="11.6" fill="#fff" stroke="#78d058" stroke-width="2"/><rect x="1.5" y="2.3" width="12.4" height="11.6" fill="none" stroke="#2c9c2c" stroke-width="1"/><circle cx="7.7" cy="8.1" r="4.9" fill="#f8a010" stroke="#e07000" stroke-width=".8"/><circle cx="7.7" cy="8.1" r="2.5" fill="#c8e8e8"/></g>
<text transform="translate(82.30 382.12) scale(0.9055555555555556 1)" font-family="'Liberation Sans', sans-serif" font-size="9.0" fill="#000" stroke="#000" stroke-width="0.22">Coaxial Ports</text>
<g transform="translate(65.70 385.45) scale(0.774)"><rect x="1.5" y="2.3" width="12.4" height="11.6" fill="#fff" stroke="#f8a878" stroke-width="2"/><rect x="1.5" y="2.3" width="12.4" height="11.6" fill="none" stroke="#e06820" stroke-width="1"/><path d="M2.5 3.3L13 13M13 3.3L2.5 13" stroke="#f08050" stroke-width="1"/></g>
<text transform="translate(82.30 394.50) scale(0.9055555555555556 1)" font-family="'Liberation Sans', sans-serif" font-size="9.0" fill="#000" stroke="#000" stroke-width="0.22">Waveguide Ports</text>
<rect x="54.15" y="400.59" width="6.9" height="6.9" fill="#fff" stroke="#808080" stroke-width="0.9" rx="0.4"/>
<rect x="55.60" y="403.54" width="4.0" height="1.0" fill="#000"/>
<g transform="translate(65.70 397.84) scale(0.774)"><path d="M6.4 2.0H15.2V9.8L10.399999999999999 13.6H1.6V5.8Z" fill="#fff"/><rect x="6.4" y="2.0" width="8.80" height="7.80" fill="#eef2ee"/><path d="M7.60 2.80H14.40V8.80Q8.90 8.30 7.60 2.80Z" fill="#a4b4a4"/><path d="M1.6 13.6L6.4 9.8M1.6 5.8L6.4 2.0M10.399999999999999 5.8L15.2 2.0" fill="none" stroke="#e818c0" stroke-width="1.12"/><rect x="6.4" y="2.0" width="8.80" height="7.80" fill="none" stroke="#e818c0" stroke-width="1.25"/><path d="M10.399999999999999 13.6L15.2 9.8" fill="none" stroke="#181858" stroke-width="1.25"/><rect x="1.6" y="5.8" width="8.80" height="7.80" fill="none" stroke="#181858" stroke-width="1.38"/></g>
<rect x="80.10" y="398.04" width="53" height="12.0" fill="#3399ff"/>
<rect x="80.50" y="398.44" width="52.2" height="11.2" fill="none" stroke="#5c4028" stroke-width="0.8" stroke-dasharray="1.1 0.45"/>
<text transform="translate(82.30 406.89) scale(0.9055555555555556 1)" font-family="'Liberation Sans', sans-serif" font-size="9.0" fill="#fff" stroke="#fff" stroke-width="0.22" textLength="55.21" lengthAdjust="spacingAndGlyphs">Plane Waves</text>
<g transform="translate(80.40 410.22) scale(0.774)"><path d="M6.4 2.0H15.2V9.8L10.399999999999999 13.6H1.6V5.8Z" fill="#fff"/><rect x="6.4" y="2.0" width="8.80" height="7.80" fill="#eef2ee"/><path d="M7.60 2.80H14.40V8.80Q8.90 8.30 7.60 2.80Z" fill="#a4b4a4"/><path d="M1.6 13.6L6.4 9.8M1.6 5.8L6.4 2.0M10.399999999999999 5.8L15.2 2.0" fill="none" stroke="#e818c0" stroke-width="1.12"/><rect x="6.4" y="2.0" width="8.80" height="7.80" fill="none" stroke="#e818c0" stroke-width="1.25"/><path d="M10.399999999999999 13.6L15.2 9.8" fill="none" stroke="#181858" stroke-width="1.25"/><rect x="1.6" y="5.8" width="8.80" height="7.80" fill="none" stroke="#181858" stroke-width="1.38"/></g>
<text transform="translate(97.00 419.27) scale(0.9055555555555556 1)" font-family="'Liberation Sans', sans-serif" font-size="9.0" fill="#000" stroke="#000" stroke-width="0.22">PW_1</text>
<g transform="translate(80.40 422.61) scale(0.774)"><path d="M6.4 2.0H15.2V9.8L10.399999999999999 13.6H1.6V5.8Z" fill="#fff"/><rect x="6.4" y="2.0" width="8.80" height="7.80" fill="#eef2ee"/><path d="M7.60 2.80H14.40V8.80Q8.90 8.30 7.60 2.80Z" fill="#a4b4a4"/><path d="M1.6 13.6L6.4 9.8M1.6 5.8L6.4 2.0M10.399999999999999 5.8L15.2 2.0" fill="none" stroke="#e818c0" stroke-width="1.12"/><rect x="6.4" y="2.0" width="8.80" height="7.80" fill="none" stroke="#e818c0" stroke-width="1.25"/><path d="M10.399999999999999 13.6L15.2 9.8" fill="none" stroke="#181858" stroke-width="1.25"/><rect x="1.6" y="5.8" width="8.80" height="7.80" fill="none" stroke="#181858" stroke-width="1.38"/></g>
<text transform="translate(97.00 431.66) scale(0.9055555555555556 1)" font-family="'Liberation Sans', sans-serif" font-size="9.0" fill="#000" stroke="#000" stroke-width="0.22">PW_2</text>
<g transform="translate(80.40 434.99) scale(0.774)"><path d="M6.4 2.0H15.2V9.8L10.399999999999999 13.6H1.6V5.8Z" fill="#fff"/><rect x="6.4" y="2.0" width="8.80" height="7.80" fill="#eef2ee"/><path d="M7.60 2.80H14.40V8.80Q8.90 8.30 7.60 2.80Z" fill="#a4b4a4"/><path d="M1.6 13.6L6.4 9.8M1.6 5.8L6.4 2.0M10.399999999999999 5.8L15.2 2.0" fill="none" stroke="#e818c0" stroke-width="1.12"/><rect x="6.4" y="2.0" width="8.80" height="7.80" fill="none" stroke="#e818c0" stroke-width="1.25"/><path d="M10.399999999999999 13.6L15.2 9.8" fill="none" stroke="#181858" stroke-width="1.25"/><rect x="1.6" y="5.8" width="8.80" height="7.80" fill="none" stroke="#181858" stroke-width="1.38"/></g>
<text transform="translate(97.00 444.04) scale(0.9055555555555556 1)" font-family="'Liberation Sans', sans-serif" font-size="9.0" fill="#000" stroke="#000" stroke-width="0.22">PW_3</text>
<g transform="translate(65.70 447.38) scale(0.774)"><path d="M6.4 2.0H15.2V9.8L10.399999999999999 13.6H1.6V5.8Z" fill="#fff"/><rect x="6.4" y="2.0" width="8.80" height="7.80" fill="#eef2ea"/><path d="M7.60 2.80H14.40V8.80Q8.90 8.30 7.60 2.80Z" fill="#a4b8a4"/><path d="M1.6 13.6L6.4 9.8M1.6 5.8L6.4 2.0M10.399999999999999 5.8L15.2 2.0" fill="none" stroke="#808038" stroke-width="1.12"/><rect x="6.4" y="2.0" width="8.80" height="7.80" fill="none" stroke="#808038" stroke-width="1.25"/><path d="M10.399999999999999 13.6L15.2 9.8" fill="none" stroke="#181858" stroke-width="1.25"/><rect x="1.6" y="5.8" width="8.80" height="7.80" fill="none" stroke="#181858" stroke-width="1.38"/></g>
<text transform="translate(82.30 456.43) scale(0.9055555555555556 1)" font-family="'Liberation Sans', sans-serif" font-size="9.0" fill="#000" stroke="#000" stroke-width="0.22">Gaussian Beams</text>
<rect x="39.45" y="462.51" width="6.9" height="6.9" fill="#fff" stroke="#808080" stroke-width="0.9" rx="0.4"/>
<rect x="40.90" y="465.46" width="4.0" height="1.0" fill="#000"/>
<g transform="translate(51.00 459.76) scale(0.774)"><rect x="0" y="0" width="16" height="16" fill="#8c8c8c"/><path d="M0 16V11C2 11 3 4 5 4S8 12 9.5 12S12 2 14 1L16 0V16Z" fill="#78b828"/><path d="M0 11C2 11 3 4 5 4S8 12 9.5 12S12 2 14 1L16 0" fill="none" stroke="#d8f060" stroke-width="1.2"/><rect x="0" y="13.5" width="16" height="2.5" fill="#a8d030"/></g>
<text transform="translate(67.60 468.81) scale(0.9055555555555556 1)" font-family="'Liberation Sans', sans-serif" font-size="9.0" fill="#000" stroke="#000" stroke-width="0.22">Observables</text>
<g transform="translate(65.70 472.15) scale(0.774)"><path d="M8 6V14" stroke="#20a020" stroke-width="1.8"/><path d="M3.5 7L8 0.5L12.5 7Z" fill="#18b018"/><path d="M1.5 9L8 14.5L14.5 9" fill="none" stroke="#20b020" stroke-width="1.4"/><circle cx="8" cy="14" r="1.3" fill="#106010"/></g>
<text transform="translate(82.30 481.20) scale(0.9055555555555556 1)" font-family="'Liberation Sans', sans-serif" font-size="9.0" fill="#000" stroke="#000" stroke-width="0.22" textLength="37.99" lengthAdjust="spacingAndGlyphs">Temporal</text>
<g transform="translate(65.70 484.53) scale(0.774)"><path d="M1 7L7 2V11L1 15Z" fill="#f0f8f0" stroke="#80c080" stroke-width=".7"/><path d="M4 7L10 2V11L4 15Z" fill="#fff" stroke="#a0a0a0" stroke-width=".6"/><path d="M8 6.5L14 1.5V10.5L8 15Z" fill="url(#grain)" stroke="#303060" stroke-width=".5"/></g>
<text transform="translate(82.30 493.58) scale(0.9055555555555556 1)" font-family="'Liberation Sans', sans-serif" font-size="9.0" fill="#000" stroke="#000" stroke-width="0.22">Near-Field</text>
<g transform="translate(65.70 496.92) scale(0.774)"><ellipse cx="4.8" cy="11" rx="4.3" ry="3.6" fill="#f8d810" stroke="#f06010" stroke-width="1" transform="rotate(-35 4.8 11)"/><ellipse cx="11" cy="4.8" rx="4.3" ry="3.3" fill="#f8d810" stroke="#f08010" stroke-width="1" transform="rotate(-40 11 4.8)"/><ellipse cx="4.5" cy="5" rx="2.6" ry="1.8" fill="#f8a020" stroke="#e030a0" stroke-width=".8" transform="rotate(40 4.5 5)"/><ellipse cx="11.5" cy="11.5" rx="2.8" ry="1.9" fill="#f8c020" stroke="#e030a0" stroke-width=".8" transform="rotate(40 11.5 11.5)"/><circle cx="8" cy="8" r="1.3" fill="#3090e0"/></g>
<text transform="translate(82.30 505.97) scale(0.9055555555555556 1)" font-family="'Liberation Sans', sans-serif" font-size="9.0" fill="#000" stroke="#000" stroke-width="0.22">Far-Field</text>
<g transform="translate(65.70 509.30) scale(0.774)"><path d="M1 14C1 10 5 10 6 9L8 11L10 9C11 10 15 10 15 14Z" fill="#90c8f0" stroke="#4090d0" stroke-width=".8"/><circle cx="8" cy="5" r="4" fill="#e8f0f8" stroke="#70a8d8" stroke-width="1"/><path d="M8 2V13M5.5 5H10.5" stroke="#909090" stroke-width=".8"/></g>
<text transform="translate(82.30 518.35) scale(0.9055555555555556 1)" font-family="'Liberation Sans', sans-serif" font-size="9.0" fill="#000" stroke="#000" stroke-width="0.22">Radar Cross Sections</text>
<g transform="translate(65.70 521.68) scale(0.774)"><path d="M6.4 2.0H15.2V9.8L10.399999999999999 13.6H1.6V5.8Z" fill="#fff"/><rect x="6.4" y="2.0" width="8.80" height="7.80" fill="#f0f0f0"/><path d="M7.60 2.80H14.40V8.80Q8.90 8.30 7.60 2.80Z" fill="#c0c4c0"/><path d="M1.6 13.6L6.4 9.8M1.6 5.8L6.4 2.0M10.399999999999999 5.8L15.2 2.0" fill="none" stroke="#7828b0" stroke-width="1.12"/><rect x="6.4" y="2.0" width="8.80" height="7.80" fill="none" stroke="#7828b0" stroke-width="1.25"/><path d="M10.399999999999999 13.6L15.2 9.8" fill="none" stroke="#7020a8" stroke-width="1.25"/><rect x="1.6" y="5.8" width="8.80" height="7.80" fill="none" stroke="#7020a8" stroke-width="1.38"/></g>
<text transform="translate(82.30 530.74) scale(0.9055555555555556 1)" font-family="'Liberation Sans', sans-serif" font-size="9.0" fill="#000" stroke="#000" stroke-width="0.22">Huygens Surfaces</text>
<g transform="translate(65.70 534.07) scale(0.774)"><path d="M3.5 9V15" stroke="#602020" stroke-width="1.2"/><path d="M0.5 10L3.5 6L6.5 10Z" fill="#e01010"/><path d="M8 4V9" stroke="#805010" stroke-width="1.2"/><path d="M5.2 5L8 1L10.8 5Z" fill="#f09010"/><path d="M12.5 9V15" stroke="#205020" stroke-width="1.2"/><path d="M9.5 10L12.5 6L15.5 10Z" fill="#10c020"/></g>
<text transform="translate(82.30 543.12) scale(0.9055555555555556 1)" font-family="'Liberation Sans', sans-serif" font-size="9.0" fill="#000" stroke="#000" stroke-width="0.22">Port Definitions</text>
<g transform="translate(65.70 546.45) scale(0.774)"><path d="M8 0.5L15 4V12L8 15.5L1 12V4Z" fill="#a8a098" stroke="#605850" stroke-width=".7"/><path d="M8 8L15 4V12L8 15.5Z" fill="#807870"/><path d="M8 0.5L15 4L8 8L1 4Z" fill="#d0c8c0"/><rect x="3" y="5" width="1.6" height="1.6" fill="#f0e020"/><rect x="5" y="8" width="1.6" height="1.6" fill="#e020c0"/><rect x="3" y="10" width="1.6" height="1.6" fill="#f0e020"/><rect x="6" y="3" width="1.6" height="1.6" fill="#e020c0"/><rect x="9" y="2.5" width="1.6" height="1.6" fill="#f0e020"/><rect x="10" y="6" width="1.6" height="1.6" fill="#f0e020"/><rect x="12" y="8" width="1.6" height="1.6" fill="#e020c0"/><rect x="10" y="11" width="1.6" height="1.6" fill="#f0e020"/><rect x="6" y="11.5" width="1.6" height="1.6" fill="#e020c0"/><rect x="7" y="6" width="1.6" height="1.6" fill="#f0f0f0"/><rect x="12" y="5" width="1.6" height="1.6" fill="#f8f8f8"/></g>
<text transform="translate(82.30 555.50) scale(0.9055555555555556 1)" font-family="'Liberation Sans', sans-serif" font-size="9.0" fill="#000" stroke="#000" stroke-width="0.22">Domain Energy</text>
<g transform="translate(65.70 558.84) scale(0.774)"><path d="M0.5 13C4 10 4 2 7 2S10 5 11 6" fill="none" stroke="#7020a0" stroke-width="1.3"/><rect x="6.5" y="6.5" width="9" height="9" fill="#d8d8d8" stroke="#505050"/><rect x="8" y="8" width="2.5" height="2.2" fill="#e020c0"/><rect x="11.5" y="8" width="2.5" height="2.2" fill="#e020c0"/><rect x="8" y="11.5" width="2.5" height="2.2" fill="#e020c0"/><rect x="11.5" y="11.5" width="2.5" height="2.2" fill="#e020c0"/><path d="M8 5.5H14V6.5" fill="none" stroke="#505050"/></g>
<text transform="translate(82.30 567.89) scale(0.9055555555555556 1)" font-family="'Liberation Sans', sans-serif" font-size="9.0" fill="#000" stroke="#000" stroke-width="0.22">Periodic Characteristics</text>
<g transform="translate(65.70 571.23) scale(0.774)"><rect x="0" y="0" width="13" height="11" fill="#000"/><path d="M1 10C3 9 4 2 7.5 2S11 6 12 7" fill="none" stroke="#f8c800" stroke-width="1.8"/><rect x="7.5" y="6.5" width="8" height="9" fill="#e8f0e0" stroke="#606060"/><path d="M9 9H14M9 11H14M9 13H14" stroke="#80b080" stroke-width=".7"/></g>
<text transform="translate(82.30 580.28) scale(0.9055555555555556 1)" font-family="'Liberation Sans', sans-serif" font-size="9.0" fill="#000" stroke="#000" stroke-width="0.22">Data Manager</text>
<rect x="215.8" y="0" width="1.0" height="600" fill="#fbfbfb"/>
<rect x="218.4" y="0" width="20.3" height="252" fill="#f0f0f0"/>
<rect x="218.2" y="0" width="0.9" height="252" fill="#a0a0a0"/>
<rect x="218.8" y="252" width="0.9" height="348" fill="#a8a8a8"/>
<rect x="218.2" y="251.4" width="20.4" height="0.9" fill="#a8a8a8"/>
<rect x="222.0" y="0" width="0.9" height="1.6" fill="#b0b0b0"/>
<rect x="224.3" y="0" width="0.9" height="1.6" fill="#b0b0b0"/>
<rect x="226.6" y="0" width="0.9" height="1.6" fill="#b0b0b0"/>
<rect x="228.9" y="0" width="0.9" height="1.6" fill="#b0b0b0"/>
<rect x="231.2" y="0" width="0.9" height="1.6" fill="#b0b0b0"/>
<rect x="233.5" y="0" width="0.9" height="1.6" fill="#b0b0b0"/>
<rect x="235.8" y="0" width="0.9" height="1.6" fill="#b0b0b0"/>
<g transform="translate(222.20 5.80) scale(0.774)"><rect x="0.6" y="3.6" width="14.8" height="8.8" fill="#f89808" stroke="#381800" stroke-width="1.3"/><path d="M3 4.4V8.6M5.5 4.4V7.4M8 4.4V8.6M10.5 4.4V7.4M13 4.4V8.6" stroke="#fff" stroke-width="1.3"/></g>
<g transform="translate(222.20 22.60) scale(0.774)"><path d="M0.5 8H15.5M8 1V15" stroke="#808080" stroke-width="1.2"/><path d="M0.5 8C2 1 6 1 8 8S14 15 15.5 8" fill="none" stroke="#f88010" stroke-width="1.5"/></g>
<g transform="translate(222.20 39.70) scale(0.774)"><rect x="5.5" y="5.5" width="9" height="8.8" fill="#d0a050" stroke="#906820" stroke-width=".8"/><rect x="4" y="4" width="9" height="8.8" fill="#90a860" stroke="#506828" stroke-width=".8"/><rect x="2.4" y="2.2" width="9" height="9" fill="#e8e8d0" stroke="#606050" stroke-width=".9"/><rect x="4" y="4" width="1.8" height="5.4" fill="#2090d0"/><rect x="7.6" y="4" width="1.8" height="5.4" fill="#60b0e0"/></g>
<g transform="translate(222.20 56.80) scale(0.774)"><path d="M5.5 1.5H15.5V8.5L10.5 14.5H0.5V7.5Z" fill="#fff"/><rect x="8" y="3" width="6.4" height="3.4" fill="#e4dcc0"/><path d="M0.5 14.5L5.5 9H10" fill="none" stroke="#1828a8" stroke-width=".9"/><path d="M5.5 1.5H15.5V8.5L10.5 14.5H0.5V7.5ZM0.5 7.5H10.5V14.5M10.5 7.5L15.5 1.5" fill="none" stroke="#1420a0" stroke-width="1.6" stroke-linejoin="round"/></g>
<g transform="translate(222.20 73.70) scale(0.774)"><rect x="0" y="0" width="16" height="16" fill="url(#gb)"/><rect x="0" y="0" width="16" height="2" fill="#2458b0"/><rect x="1.5" y="1.5" width="2" height="2" fill="#0c1c38" opacity="1"/><rect x="5.5" y="1.5" width="2" height="2" fill="#0c1c38" opacity="1"/><rect x="9.5" y="1.5" width="2" height="2" fill="#0c1c38" opacity="1"/><rect x="13.5" y="1.5" width="2" height="2" fill="#0c1c38" opacity="1"/><rect x="1.5" y="5.5" width="2" height="2" fill="#7890b0" opacity="1"/><rect x="5.5" y="5.5" width="2" height="2" fill="#7890b0" opacity="1"/><rect x="9.5" y="5.5" width="2" height="2" fill="#7890b0" opacity="1"/><rect x="13.5" y="5.5" width="2" height="2" fill="#7890b0" opacity="1"/><rect x="1.5" y="9.5" width="2" height="2" fill="#7890b0" opacity="0.7"/><rect x="5.5" y="9.5" width="2" height="2" fill="#7890b0" opacity="0.7"/><rect x="9.5" y="9.5" width="2" height="2" fill="#7890b0" opacity="0.7"/><rect x="13.5" y="9.5" width="2" height="2" fill="#7890b0" opacity="0.7"/><rect x="1.5" y="13.5" width="2" height="2" fill="#7890b0" opacity="0.7"/><rect x="5.5" y="13.5" width="2" height="2" fill="#7890b0" opacity="0.7"/><rect x="9.5" y="13.5" width="2" height="2" fill="#7890b0" opacity="0.7"/><rect x="13.5" y="13.5" width="2" height="2" fill="#7890b0" opacity="0.7"/></g>
<g transform="translate(222.20 90.70) scale(0.774)"><rect x="0" y="0" width="16" height="16" fill="url(#gb)"/><rect x="0" y="0" width="16" height="2" fill="#2458b0"/><rect x="1.5" y="1.5" width="2" height="2" fill="#0c1c38" opacity="1"/><rect x="5.5" y="1.5" width="2" height="2" fill="#0c1c38" opacity="1"/><rect x="9.5" y="1.5" width="2" height="2" fill="#0c1c38" opacity="1"/><rect x="13.5" y="1.5" width="2" height="2" fill="#0c1c38" opacity="1"/><rect x="1.5" y="5.5" width="2" height="2" fill="#7890b0" opacity="1"/><rect x="5.5" y="5.5" width="2" height="2" fill="#7890b0" opacity="1"/><rect x="9.5" y="5.5" width="2" height="2" fill="#7890b0" opacity="1"/><rect x="13.5" y="5.5" width="2" height="2" fill="#7890b0" opacity="1"/><rect x="1.5" y="9.5" width="2" height="2" fill="#7890b0" opacity="0.7"/><rect x="5.5" y="9.5" width="2" height="2" fill="#7890b0" opacity="0.7"/><rect x="9.5" y="9.5" width="2" height="2" fill="#7890b0" opacity="0.7"/><rect x="13.5" y="9.5" width="2" height="2" fill="#7890b0" opacity="0.7"/><rect x="1.5" y="13.5" width="2" height="2" fill="#7890b0" opacity="0.7"/><rect x="5.5" y="13.5" width="2" height="2" fill="#7890b0" opacity="0.7"/><rect x="9.5" y="13.5" width="2" height="2" fill="#7890b0" opacity="0.7"/><rect x="13.5" y="13.5" width="2" height="2" fill="#7890b0" opacity="0.7"/><rect x="1" y="6" width="14" height="4.5" fill="#a8b0b8"/><path d="M2 8.5H4M5 7V10M7 8.5H9M10 7V10M12 8.5H14" stroke="#606870" stroke-width=".9"/></g>
<rect x="221" y="107.4" width="14.7" height="0.9" fill="#a4a4a4"/>
<g transform="translate(222.20 112.50) scale(0.774)"><rect x="0.5" y="0.5" width="15" height="15" fill="#f8f8f8" stroke="#d8d8d8"/><text x="1.8" y="11.6" font-family="Liberation Serif, serif" font-style="italic" font-weight="bold" font-size="12.5" fill="#2040c0">f</text><text x="5.8" y="13.2" font-family="Liberation Sans, sans-serif" font-size="8.6" font-weight="bold" fill="#182048">(x)</text></g>
<g transform="translate(222.20 129.50) scale(0.774)"><rect x="3" y="3" width="12.5" height="12.5" fill="#686868"/><rect x="1" y="1" width="12.5" height="12.5" fill="#fff" stroke="#505050" stroke-width="1.2"/><path d="M4 3L10.5 11.5M11.5 3L3 11.5" stroke="#e02010" stroke-width="1.7"/></g>
<g transform="translate(222.20 146.30) scale(0.774)"><rect x="1" y="1" width="14" height="14" fill="#fff" stroke="#505050" stroke-width="1.5"/><path d="M3.5 8.5L8.5 13.5M8.5 8.5L3.5 13.5" stroke="#4070b0" stroke-width="1.5"/><text x="9.5" y="8" font-family="Liberation Sans, sans-serif" font-weight="bold" font-size="7.5" fill="#b01818">2</text></g>
<g transform="translate(222.20 163.20) scale(0.774)"><rect x="3" y="3.4" width="12.5" height="11.5" fill="#606060"/><rect x="1" y="1.5" width="12.5" height="11.5" fill="#e0dcc0" stroke="#505040" stroke-width="1.2"/><path d="M3 11C4 6 7 4 11 4" stroke="#2040c0" stroke-width="1.6" fill="none"/><rect x="7" y="7.5" width="4.5" height="4" fill="#a8d0f0"/></g>
<g transform="translate(222.20 180.40) scale(0.774)"><path d="M4 2C2 6 4 12 8 13M12 4C13 8 12 12 9 13" stroke="#b0b0b0" stroke-width="1.2" fill="none"/><path d="M2.5 8L6.5 13.5L14.5 1.5" stroke="#f07010" stroke-width="2.2" fill="none"/></g>
<g transform="translate(222.20 197.80) scale(0.774)"><rect x="0" y="0" width="13" height="11" fill="#000"/><path d="M1 10C3 9 4 2 7.5 2S11 6 12 7" fill="none" stroke="#f8c800" stroke-width="1.8"/><rect x="7.5" y="6.5" width="8" height="9" fill="#e8f0e0" stroke="#606060"/><path d="M9 9H14M9 11H14M9 13H14" stroke="#80b080" stroke-width=".7"/></g>
<g transform="translate(222.20 214.80) scale(0.774)"><rect x="1.5" y="1" width="12" height="14" fill="#5898e8" stroke="#3060b0"/><rect x="3" y="2.5" width="9" height="3.5" fill="#e0f0ff"/><path d="M3 8H12M3 10.5H12M3 13H12" stroke="#a0c8f8" stroke-width="1.2"/><rect x="10" y="11" width="2.5" height="2.8" fill="#f8a020"/></g>
<rect x="221" y="231.3" width="14.7" height="0.9" fill="#a4a4a4"/>
<g transform="translate(222.20 236.80) scale(0.774)"><path d="M8.00 0.60L9.30 4.86L13.23 2.77L11.14 6.70L15.40 8.00L11.14 9.30L13.23 13.23L9.30 11.14L8.00 15.40L6.70 11.14L2.77 13.23L4.86 9.30L0.60 8.00L4.86 6.70L2.77 2.77L6.70 4.86Z" fill="#207414"/><circle cx="8" cy="8" r="3.4" fill="#48a028"/><circle cx="7.4" cy="7.2" r="1.6" fill="#70c040"/></g>
<rect x="238.5" y="0" width="514.5" height="600" fill="#000"/>
<rect x="239" y="0" width="70.4" height="11.3" fill="#0a0a70"/>
<text x="239.5" y="8.7" font-family="'Liberation Sans', sans-serif" font-size="11.1" fill="#dcdcf4" textLength="58.4" lengthAdjust="spacing">Perspective</text>
<line x1="398.7" y1="57.9" x2="398.7" y2="322.0" stroke="#3434f4" stroke-width="1.3" stroke-linecap="round"/>
<line x1="398.7" y1="322.0" x2="635.2" y2="390.7" stroke="#3434f4" stroke-width="1.3" stroke-linecap="round"/>
<line x1="263.0" y1="441.0" x2="398.7" y2="322.0" stroke="#3434f4" stroke-width="1.3" stroke-linecap="round"/>
<line x1="420.0" y1="146.5" x2="420.0" y2="312.3" stroke="#e828d8" stroke-width="1.7" stroke-linecap="round"/>
<line x1="420.0" y1="312.3" x2="557.5" y2="351.0" stroke="#e828d8" stroke-width="1.7" stroke-linecap="round"/>
<line x1="340.4" y1="380.8" x2="420.0" y2="312.3" stroke="#e828d8" stroke-width="1.7" stroke-linecap="round"/>
<line x1="449.5" y1="283.5" x2="753" y2="20.8" stroke="#10e010" stroke-width="1.2" stroke-linecap="round"/>
<line x1="449.5" y1="283.5" x2="753" y2="371.7" stroke="#f00000" stroke-width="1.3" stroke-linecap="round"/>
<circle cx="449.5" cy="283.1" r="63.6" fill="url(#gball)"/>
<circle cx="448.1" cy="283.7" r="24" fill="url(#ghl)"/>
<path d="M417 312C440 320 500 318 512.5 280" fill="none" stroke="#ff9088" stroke-width="0.7" opacity=".55"/>
<line x1="262.5" y1="176.3" x2="498.8" y2="244.5" stroke="#3434f4" stroke-width="1.3" stroke-linecap="round"/>
<line x1="498.8" y1="244.5" x2="499.0" y2="508.7" stroke="#3434f4" stroke-width="1.3" stroke-linecap="round"/>
<line x1="499.0" y1="508.7" x2="263.0" y2="441.0" stroke="#3434f4" stroke-width="1.3" stroke-linecap="round"/>
<line x1="263.0" y1="441.0" x2="262.5" y2="176.3" stroke="#3434f4" stroke-width="1.3" stroke-linecap="round"/>
<line x1="262.5" y1="176.3" x2="398.7" y2="57.9" stroke="#3434f4" stroke-width="1.3" stroke-linecap="round"/>
<line x1="398.7" y1="57.9" x2="635.0" y2="126.2" stroke="#3434f4" stroke-width="1.3" stroke-linecap="round"/>
<line x1="635.0" y1="126.2" x2="635.2" y2="390.7" stroke="#3434f4" stroke-width="1.3" stroke-linecap="round"/>
<line x1="498.8" y1="244.5" x2="635.0" y2="126.2" stroke="#3434f4" stroke-width="1.3" stroke-linecap="round"/>
<line x1="499.0" y1="508.7" x2="635.2" y2="390.7" stroke="#3434f4" stroke-width="1.3" stroke-linecap="round"/>
<line x1="340.2" y1="216.8" x2="477.9" y2="254.6" stroke="#e828d8" stroke-width="1.7" stroke-linecap="round"/>
<line x1="477.9" y1="254.6" x2="477.9" y2="420.2" stroke="#e828d8" stroke-width="1.7" stroke-linecap="round"/>
<line x1="477.9" y1="420.2" x2="340.4" y2="380.8" stroke="#e828d8" stroke-width="1.7" stroke-linecap="round"/>
<line x1="340.4" y1="380.8" x2="340.2" y2="216.8" stroke="#e828d8" stroke-width="1.7" stroke-linecap="round"/>
<line x1="340.2" y1="216.8" x2="420.0" y2="146.5" stroke="#e828d8" stroke-width="1.7" stroke-linecap="round"/>
<line x1="420.0" y1="146.5" x2="557.5" y2="187.0" stroke="#e828d8" stroke-width="1.7" stroke-linecap="round"/>
<line x1="557.5" y1="187.0" x2="557.5" y2="351.0" stroke="#e828d8" stroke-width="1.7" stroke-linecap="round"/>
<line x1="477.9" y1="254.6" x2="557.5" y2="187.0" stroke="#e828d8" stroke-width="1.7" stroke-linecap="round"/>
<line x1="477.9" y1="420.2" x2="557.5" y2="351.0" stroke="#e828d8" stroke-width="1.7" stroke-linecap="round"/>
<path d="M341.9 201.2L343.3 205.5L342.9 210.5L341.9 216.8H340.3L340.1 210.5L340.5 205.5Z" fill="#3a1ad8"/>
<path d="M340.4 217L351 214L350.5 215.8L360.3 217L355 219L358.5 221.8L349 222Z" fill="#ff48d0"/>
<path d="M340.4 216.5L335.3 226.2L339.6 221.5L340.6 222L343.8 226.5L343.3 220Z" fill="#28a898"/>
<path d="M338.7 365.6L340.2 369.5L340.6 374L341.6 381H339.9L338.6 374L338.3 369.5Z" fill="#3a1ad8"/>
<path d="M341 381.5L350 378.5L349.8 380L359 379.3L352 382.6L346 383.2Z" fill="#ff58d4"/>
<path d="M340.6 381L341.2 387L343 391L343.6 386Z" fill="#38b8a8"/>
<rect x="116.6" y="400.8" width="148.6" height="117.2" fill="#000" opacity=".14"/>
<rect x="115.5" y="399.6" width="148.3" height="117.1" fill="#f2f2f2" stroke="#f8f6f2" stroke-width="0.9"/>
<rect x="118" y="402" width="143.4" height="16.7" fill="#91c9f7"/>
<text x="142.5" y="413.30" font-family="'Liberation Sans', sans-serif" font-size="9.7" fill="#000" stroke="#000" stroke-width="0.2" textLength="79.8" lengthAdjust="spacingAndGlyphs">Insert New Source...</text>
<text x="142.5" y="430.50" font-family="'Liberation Sans', sans-serif" font-size="9.7" fill="#000" stroke="#000" stroke-width="0.2" textLength="73.4" lengthAdjust="spacingAndGlyphs">Import SBR Rays...</text>
<rect x="139.4" y="438.1" width="122.6" height="0.8" fill="#d4d4d4"/>
<text x="142.5" y="452.80" font-family="'Liberation Sans', sans-serif" font-size="9.7" fill="#000" stroke="#000" stroke-width="0.2" textLength="19.6" lengthAdjust="spacingAndGlyphs">Hide</text>
<text x="142.5" y="469.50" font-family="'Liberation Sans', sans-serif" font-size="9.7" fill="#6d6d6d" stroke="#6d6d6d" stroke-width="0.2" textLength="22.5" lengthAdjust="spacingAndGlyphs">Show</text>
<rect x="139.4" y="478.1" width="122.6" height="0.8" fill="#d4d4d4"/>
<text x="142.5" y="492.20" font-family="'Liberation Sans', sans-serif" font-size="9.7" fill="#6d6d6d" stroke="#6d6d6d" stroke-width="0.2" textLength="25.6" lengthAdjust="spacingAndGlyphs">Delete</text>
<text x="142.5" y="509.40" font-family="'Liberation Sans', sans-serif" font-size="9.7" fill="#000" stroke="#000" stroke-width="0.2" textLength="72.7" lengthAdjust="spacingAndGlyphs">Delete All Sources</text>
</svg>
</body></html>
